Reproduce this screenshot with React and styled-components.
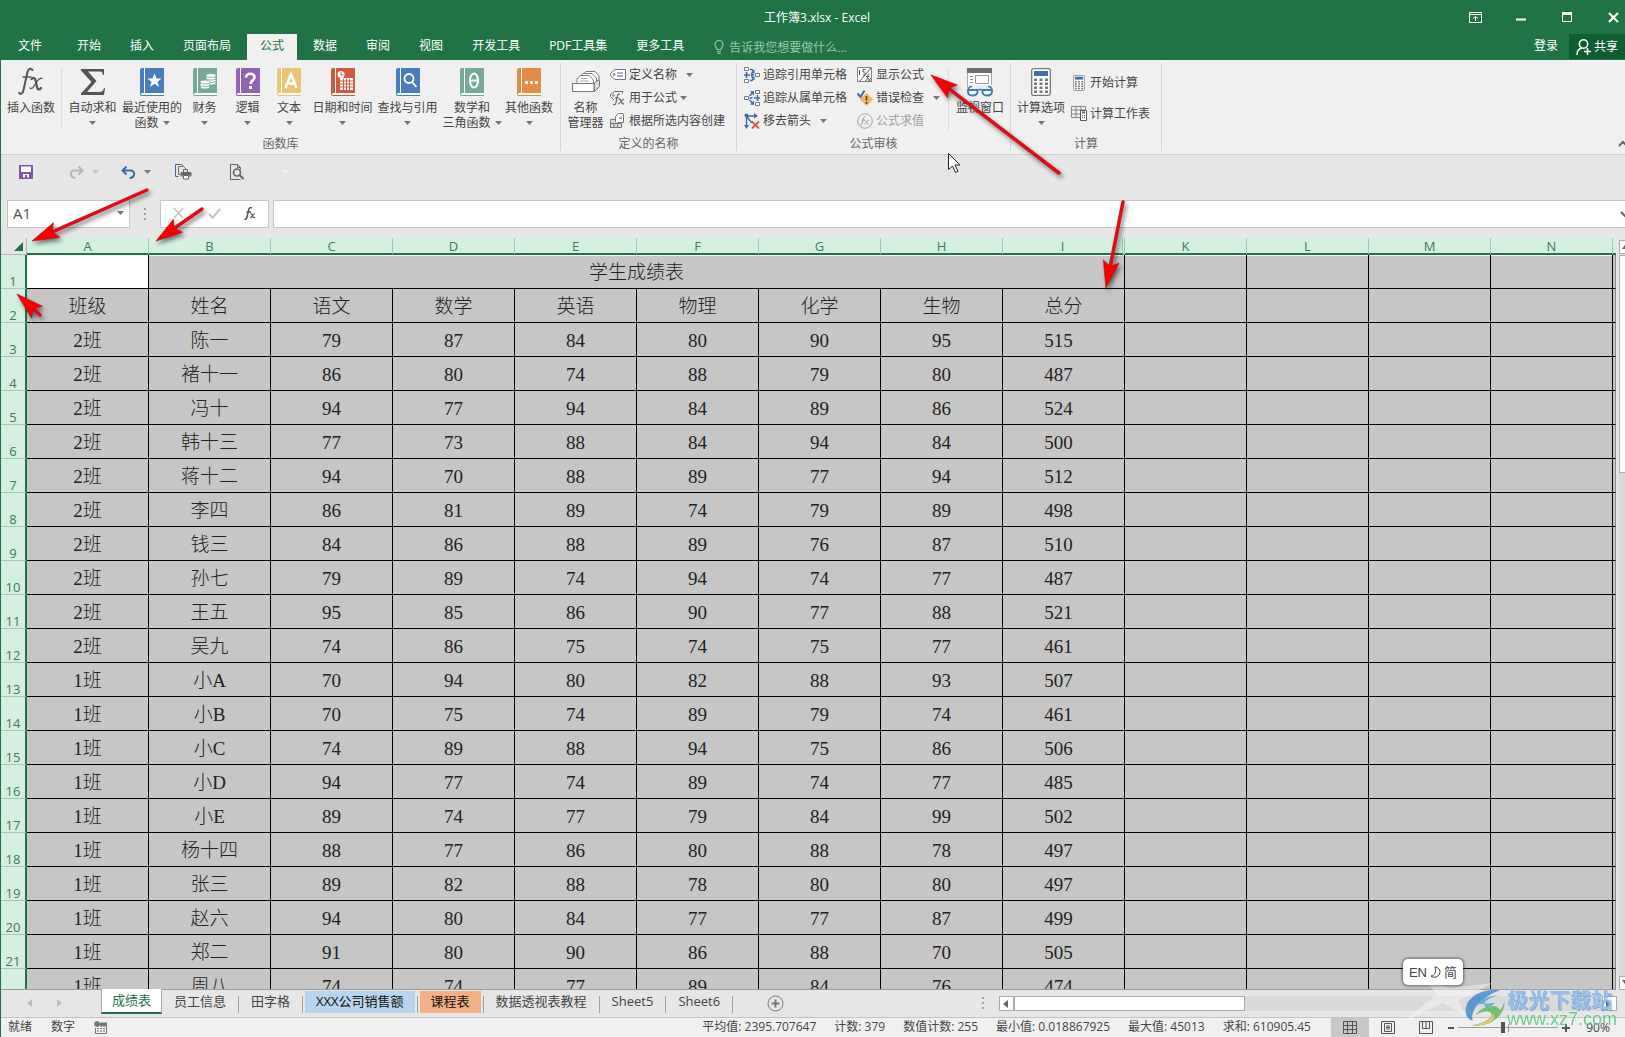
import React from 'react'
import styled, { createGlobalStyle } from 'styled-components'

const GlobalStyle = createGlobalStyle`
  *, *::before, *::after { box-sizing: border-box; }
  body {
    margin: 0;
    overflow: hidden;
    font-family: "Open Sans", "Noto Sans CJK SC", sans-serif;
    font-size: 12px;
    line-height: 15px;
    color: #444;
  }
  button, input {
    font: inherit;
    color: inherit;
    border: 0;
    margin: 0;
    padding: 0;
    background: none;
  }
  svg { display: block; flex: none; }
`

const Window = styled.div`
  position: relative;
  display: flex;
  flex-direction: column;
  height: 100vh;
  overflow: hidden;
  border-left: 1px solid #217346;
  background: #e6e6e6;
`

/* ---------- title bar and tabs ---------- */

const TitleBar = styled.header`
  display: grid;
  grid-template-columns: 1fr auto 1fr;
  align-items: center;
  flex: none;
  height: 34px;
  padding-left: 8px;
  background: #217346;
  color: #fff;
`

const Title = styled.h1`
  grid-column: 2;
  margin: 0;
  font-size: 12px;
  font-weight: 400;
`

const WindowButtons = styled.div`
  display: flex;
  justify-content: flex-end;
`

const WindowButton = styled.button`
  display: flex;
  align-items: center;
  justify-content: center;
  width: 46px;
  height: 32px;
  &:last-child { margin-right: -11px; }
`

const TabBar = styled.nav`
  display: flex;
  flex: none;
  gap: 3px;
  height: 26px;
  background: #217346;
  color: #fff;
`

const Tab = styled.button`
  height: 26px;
  padding: 0 13px 4px;
  white-space: nowrap;
  background: ${p => (p.$active ? '#f0f0f0' : 'transparent')};
  color: ${p => (p.$active ? '#217346' : '#fff')};
`

const FileTab = styled(Tab)`
  padding: 0 19px 4px 17px;
`

const TellMe = styled.button`
  display: flex;
  align-items: center;
  gap: 5px;
  margin-left: 14px;
  color: #9cc5ad;
`

const Account = styled.div`
  display: flex;
  margin-left: auto;
`

const SignIn = styled.button`
  padding: 0 11px 4px 10px;
`

const Share = styled.button`
  display: flex;
  align-items: center;
  gap: 3px;
  height: 25px;
  padding: 0 7px;
  background: #0e5c2f;
`

/* ---------- ribbon ---------- */

const RibbonBar = styled.div`
  display: flex;
  flex: none;
  height: 95px;
  padding: 3px 0;
  border-bottom: 1px solid #d0d0d0;
  background: #f0f0f0;
`

const Group = styled.section`
  display: flex;
  flex-direction: column;
  height: 88px;
  border-right: 1px solid #d4d4d4;
`

const GroupBody = styled.div`
  display: flex;
  height: 73px;
  padding-right: ${p => p.$right || 0}px;
`

const GroupName = styled.div`
  text-align: center;
  line-height: 16px;
  color: #666;
`

const Divider = styled.div`
  width: 1px;
  height: 62px;
  margin: 5px 1px 0 0;
  background: #dcdcdc;
`

const BigButton = styled.button`
  display: flex;
  flex-direction: column;
  align-items: center;
  width: ${p => p.$width}px;
  height: 73px;
  padding-top: 5px;
  white-space: nowrap;
`

const BigIcon = styled.span`
  display: flex;
  align-items: center;
  height: 28px;
  margin-bottom: 4px;
`

const Line = styled.span`
  display: flex;
  align-items: center;
  justify-content: center;
  gap: 4px;
  height: 15px;
`

const SmallColumn = styled.div`
  display: flex;
  flex-direction: column;
  align-items: flex-start;
  padding-top: ${p => p.$top || 0}px;
  padding-left: ${p => p.$left || 0}px;
  width: ${p => p.$width}px;
`

const SmallRow = styled.div`
  display: flex;
  align-items: center;
  height: ${p => p.$height || 23}px;
`

const SmallButton = styled.button`
  display: flex;
  align-items: center;
  gap: 3px;
  white-space: nowrap;
  color: ${p => (p.$muted ? '#a0a0a0' : '#444')};
`

const DropButton = styled.button`
  padding: 4px 0 4px ${p => p.$gap || 9}px;
`

const Collapse = styled.button`
  align-self: flex-end;
  margin: 0 -3px 4px auto;
`

/* ---------- quick access and formula bar ---------- */

const QuickAccess = styled.div`
  display: flex;
  align-items: center;
  flex: none;
  height: 45px;
  padding: 0 0 11px 18px;
`

const QuickButton = styled.button`
  display: flex;
  align-items: center;
  gap: 8px;
  margin-right: ${p => p.$after || 0}px;
`

const FormulaBar = styled.div`
  display: flex;
  flex: none;
  height: 38px;
  padding: 0 0 10px 6px;
`

const NameBox = styled.div`
  display: flex;
  align-items: center;
  width: 123px;
  border: 1px solid #c6c6c6;
  background: #fff;
  padding: 0 5px 2px 0;
  input {
    flex: 1;
    min-width: 0;
    padding-left: 5px;
    font-size: 15px;
    color: #555;
  }
`

const Grip = styled.div`
  display: flex;
  align-items: center;
  justify-content: center;
  width: 30px;
`

const FormulaTools = styled.div`
  display: flex;
  align-items: center;
  justify-content: space-between;
  width: 109px;
  padding: 0 12px 2px;
  margin-right: 4px;
  border: 1px solid #c6c6c6;
  background: #fff;
`

const FormulaField = styled.div`
  display: flex;
  flex: 1;
  align-items: center;
  border: 1px solid #c6c6c6;
  border-right: 0;
  background: #fff;
  input { flex: 1; }
  button { margin-right: -5px; }
`

/* ---------- sheet ---------- */

const SheetArea = styled.main`
  display: flex;
  flex: 1;
  min-height: 0;
`

const GridViewport = styled.div`
  flex: 1;
  min-width: 0;
  overflow: hidden;
  border-bottom: 1px solid #9b9b9b;
`

const Grid = styled.table`
  width: 100%;
  table-layout: fixed;
  border-collapse: separate;
  border-spacing: 0;
`

const Corner = styled.th`
  width: 26px;
  height: 17px;
  padding: 0 3px 0 0;
  border-right: 1px solid #b7b7b7;
  border-bottom: 1px solid #b7b7b7;
  svg { margin-left: auto; }
`

const ColHead = styled.th`
  height: 17px;
  padding: 2px 0 0;
  font-size: 13px;
  font-weight: 400;
  line-height: 13px;
  color: #3c7a59;
  background: #d3f0e0;
  border-right: ${p => (p.$wide ? '3px double #9fc9b3' : '1px solid #a5c7b5')};
  border-bottom: 2px solid #217346;
`

const EdgeHead = styled.th`
  width: 3px;
  padding: 0;
  background: #d3f0e0;
  border-bottom: 2px solid #217346;
`

const RowHead = styled.th`
  height: 34px;
  padding: 0;
  vertical-align: bottom;
  font-size: 13px;
  font-weight: 400;
  line-height: 13px;
  color: #3c7a59;
  background: #d3f0e0;
  border-right: 2px solid #217346;
  border-bottom: 1px solid #a5c7b5;
`

const Cell = styled.td`
  height: 34px;
  padding: 2px ${p => (p.$total ? 10 : 0)}px 0 0;
  overflow: hidden;
  text-align: center;
  white-space: nowrap;
  font-family: "Liberation Serif", "Noto Sans CJK SC", serif;
  font-size: 19px;
  font-weight: 300;
  line-height: 24px;
  color: #222;
  background: ${p => (p.$current ? '#fff' : '#c6c6c6')};
  border-right: 1px solid #000;
  border-bottom: 1px solid #000;
  tr:first-child > & { box-shadow: inset 0 1px #fff; }
`

const EdgeCell = styled.td`
  padding: 0;
  background: #c6c6c6;
  border-right: 1px solid #8f8f8f;
  border-bottom: 1px solid #000;
`

const VScroll = styled.div`
  display: flex;
  flex-direction: column;
  flex: none;
  width: 9px;
  padding: 2px 0 0 3px;
  overflow: hidden;
`

const VArrow = styled.button`
  display: flex;
  align-items: center;
  flex: none;
  height: 14px;
  padding-left: 2px;
  border: 1px solid #ababab;
  border-right: 0;
  background: #fff;
`

const VThumb = styled.div`
  height: 218px;
  margin-top: 1px;
  border: 1px solid #ababab;
  border-right: 0;
  background: #fff;
`

const VTrack = styled.div`
  flex: 1;
  background: #dadada;
`

/* ---------- sheet tabs ---------- */

const SheetBar = styled.div`
  display: flex;
  flex: none;
  height: 28px;
  margin-top: -1px;
`

const SheetNav = styled.div`
  display: flex;
  align-items: center;
  gap: 23px;
  width: 100px;
  padding-left: 26px;
`

const SheetTab = styled.button`
  display: flex;
  align-items: center;
  height: 24px;
  padding: 1px 2px 0;
  font-size: 13px;
  white-space: nowrap;
  &::after {
    content: "";
    width: 1px;
    height: 17px;
    margin: 6px -2px 0 2px;
    background: #a0a0a0;
  }
`

const SheetLabel = styled.span`
  padding: 0 ${p => (p.$fill ? 11 : 10)}px 2px;
  line-height: 20px;
  color: ${p => (p.$fill ? '#111' : '#444')};
  background: ${p => p.$fill || 'transparent'};
`

const ActiveTab = styled.button`
  height: 25px;
  padding: 0 10px;
  font-size: 13px;
  color: #217346;
  background: #fff;
  border-left: 1px solid #ababab;
  border-right: 1px solid #ababab;
  border-bottom: 2px solid #217346;
`

const AddSheet = styled.button`
  margin-left: 34px;
`

const HScroll = styled.div`
  display: flex;
  width: 618px;
  height: 15px;
  margin: 7px 8px 0 15px;
  background: #dadada;
`

const SheetGrip = styled.div`
  display: flex;
  align-items: center;
  margin-left: auto;
`

const HArrow = styled.button`
  display: flex;
  align-items: center;
  justify-content: center;
  width: 15px;
  border: 1px solid #ababab;
  background: #fff;
`

const HThumb = styled.div`
  width: 231px;
  margin-right: auto;
  border: 1px solid #ababab;
  background: #fff;
`

/* ---------- status bar ---------- */

const StatusBar = styled.footer`
  display: flex;
  align-items: center;
  flex: none;
  height: 20px;
  padding-left: 7px;
  border-top: 1px solid #c3c3c3;
  background: #f0f0f0;
  white-space: nowrap;
`

const StatusText = styled.span`
  margin-right: 19px;
  padding-bottom: 2px;
`

const Stats = styled.div`
  display: flex;
  gap: 18px;
  margin: 0 20px 0 auto;
  padding-bottom: 2px;
`

const ViewButton = styled.button`
  display: flex;
  align-items: center;
  justify-content: center;
  width: 38px;
  height: 19px;
  background: ${p => (p.$active ? '#c8c8c8' : 'transparent')};
`

const ZoomButton = styled.button`
  width: ${p => p.$width}px;
  display: flex;
  justify-content: center;
`

const ZoomSlider = styled.input`
  appearance: none;
  width: 100px;
  height: 12px;
  margin: 0 3px 0 1px;
  background:
    linear-gradient(#999, #999) center / 1px 8px no-repeat,
    linear-gradient(#999, #999) center / 100% 1px no-repeat;
  &::-webkit-slider-thumb {
    appearance: none;
    width: 4px;
    height: 11px;
    background: #555;
  }
`

const ZoomValue = styled.button`
  width: 40px;
  margin: 0 7px;
  text-align: center;
`

/* ---------- things lying over the window ---------- */

const Ime = styled.div`
  position: absolute;
  right: 162px;
  bottom: 52px;
  display: flex;
  align-items: center;
  justify-content: center;
  gap: 3px;
  width: 60px;
  height: 26px;
  border-radius: 5px;
  background: #fff;
  box-shadow: 0 0 3px 1px rgba(0, 0, 0, .5);
  font-family: "Liberation Sans", "Noto Sans CJK SC", sans-serif;
  font-size: 13px;
`

const Watermark = styled.div`
  position: absolute;
  right: 8px;
  bottom: 8px;
  display: flex;
  align-items: flex-end;
  opacity: .8;
  pointer-events: none;
  svg { overflow: visible; }
`

const WatermarkText = styled.div`
  display: flex;
  flex-direction: column;
  margin-left: 2px;
  strong {
    font-size: 21px;
    line-height: 19px;
    color: #7fb2e6;
    text-shadow: 0 0 1px #fff, 1px 1px 1px #4a86c8;
  }
  span {
    font-family: "Liberation Sans", sans-serif;
    font-size: 18px;
    line-height: 20px;
    color: #4fbd78;
    text-shadow: 0 0 2px #fff;
  }
`

const Overlay = styled.svg`
  position: absolute;
  top: 0;
  left: -1px;
  width: 1200px;
  height: 400px;
  pointer-events: none;
`

/* ---------- icons ---------- */

const Caret = ({ color = '#777' }) => (
  <svg width="7" height="4" viewBox="0 0 7 4"><path d="M0 0h7L3.500 4z" fill={color} /></svg>
)

const Chevron = ({ down }) => (
  <svg width="10" height="7" viewBox="0 0 10 7">
    <path d={down ? 'M1 1l4 4 4-4' : 'M1 6l4-4 4 4'} fill="none" stroke="#666" strokeWidth="2" />
  </svg>
)

const Dots = ({ color = '#a0a0a0' }) => (
  <svg width="2" height="12" viewBox="0 0 2 12" fill={color}>
    <path d="M0 0h2v2H0zM0 5h2v2H0zM0 10h2v2H0z" />
  </svg>
)

const Book = ({ color, children }) => (
  <svg width="24" height="28" viewBox="0 0 24 28">
    <path d="M2 0h22v28H2a2 2 0 0 1-2-2V2a2 2 0 0 1 2-2z" fill={color} />
    <path d="M4.500 0v25" stroke="#fff" />
    <path d="M2 25h22v2H2a1 1 0 0 1 0-2z" fill="#fff" />
    {children}
  </svg>
)

const FxIcon = () => (
  <svg width="26" height="30" viewBox="0 0 26 30" fill="none" stroke="#555" strokeLinecap="round">
    <path d="M14.500 3c-1-2-4-2-5 2L5.500 23c-.8 4-3 4.500-4.500 3" strokeWidth="2" />
    <path d="M5 10h8" strokeWidth="1.400" />
    <path d="M13.500 12c2-2 3.500-1 4 1l1.500 7c.5 3 2.500 3 4 1" strokeWidth="2.200" />
    <path d="M24 11.500c-2-1-3.500.5-5 3l-3 4.500c-1 2-2.500 3-4 2" strokeWidth="1.300" />
  </svg>
)

const SigmaIcon = () => (
  <svg width="24" height="28" viewBox="0 0 24 28">
    <path d="M0 1h23v6h-1c-.5-3-1.500-3.500-4-3.500H7L15.500 13 6 24h12c3 0 4-1 5-4h1l-1 7H0v-1.500L10.500 14 0 2.500z" fill="#555" />
  </svg>
)

const StarGlyph = () => <path d="M14.500 5.500l2 5h5l-4 3.200 1.500 5.300-4.500-3.200L10 19l1.500-5.300-4-3.200h5z" fill="#fff" />

const CoinsGlyph = () => (
  <g fill="#fff" stroke="#76a996" strokeWidth=".8">
    {[14, 11.500, 9, 6.500].map(y => <ellipse key={y} cx="18" cy={y + 1} rx="5" ry="2" />)}
    {[19, 16.500, 14].map(y => <ellipse key={y} cx="12" cy={y} rx="5" ry="2" />)}
  </g>
)

const QuestionGlyph = () => (
  <g>
    <path d="M10 9.500c0-5 8.500-5 8.500-.3 0 3-3.800 3.300-3.800 6.800" fill="none" stroke="#fff" strokeWidth="2.600" />
    <rect x="13" y="18" width="3" height="3" fill="#fff" />
  </g>
)

const LetterGlyph = () => <path d="M8.500 20L14 6l5.500 14M10 15.500h8" fill="none" stroke="#fff" strokeWidth="2.600" />

const DateGlyph = () => (
  <g>
    <circle cx="10" cy="6.500" r="3.500" fill="#fff" />
    <path d="M10 4v3h2.500" fill="none" stroke="#d05a3f" />
    <rect x="9" y="10" width="13" height="12" fill="#fff" />
    <path d="M9 13h13M9 16h13M9 19h13M12.500 11v11M15.500 11v11M18.500 11v11" stroke="#d05a3f" />
  </g>
)

const SearchGlyph = () => (
  <g fill="none" stroke="#fff" strokeWidth="1.800">
    <circle cx="13" cy="10.500" r="4.500" />
    <path d="M16 14l4.500 5" />
  </g>
)

const ThetaGlyph = () => (
  <g fill="none" stroke="#fff" strokeWidth="2">
    <ellipse cx="14" cy="12.500" rx="4" ry="7" />
    <path d="M10 12.500h8" />
  </g>
)

const MoreGlyph = () => <path d="M8 13h3v3H8zM13 13h3v3h-3zM18 13h3v3h-3z" fill="#fff" />

const NameManagerIcon = () => (
  <svg width="30" height="22" viewBox="0 0 30 22" fill="#fff" stroke="#777">
    <path d="M12 8V4l3-3.500h9l4 4.500v9" />
    <path d="M9 10V6l3-3.500h9l4.500 4.500v7" />
    <path d="M6 12V8l3-3.500h9l4.500 4.500v5" />
    <path d="M10 7.500h6M8.500 10h9" stroke="#aaa" />
    <path d="M23 12.500l4-3.500 1.500 1v5.500l-5 5z" fill="#ddd" />
    <rect x="1.500" y="12.500" width="21.500" height="8" />
  </svg>
)

const TagIcon = () => (
  <svg width="16" height="14" viewBox="0 0 16 14" fill="none" stroke="#777">
    <path d="M5 1.500h10.500v10H5L.500 7.500v-2z" fill="#fff" />
    <circle cx="4" cy="6.500" r="1" />
    <path d="M7 5h6M7 8h6" stroke="#44699b" />
  </svg>
)

const UseFormulaIcon = () => (
  <svg width="16" height="16" viewBox="0 0 16 16" fill="none" stroke="#666">
    <path d="M4 10L.500 6.500v-2L4.500 1.500h8v2" />
    <circle cx="3.500" cy="5.500" r=".8" />
    <path d="M10 4.500c-2-1-2.500 1-3 3L6 12.500c-.5 2.500-1.500 2.500-3 2M5 8h4.500" strokeWidth="1.200" />
    <path d="M9 9.500c2-.5 2 1 2.500 2.500s1 2.500 2.500 1.500M14 9c-2 0-4 5-6 5" strokeWidth="1.200" />
  </svg>
)

const FromSelectionIcon = () => (
  <svg width="16" height="16" viewBox="0 0 16 16" fill="none" stroke="#777">
    <path d="M.500 6.500h7v8h-7zM.500 10.500h11v4H.500M4 10v4" fill="#d9dde3" />
    <path d="M5.500 9V3.500L8.500.500h4.500l.500 1v8H8" fill="#fff" />
    <path d="M9 5h3" stroke="#44699b" />
  </svg>
)

const PrecedentsIcon = () => (
  <svg width="16" height="16" viewBox="0 0 16 16" fill="none">
    <path d="M.500.500h4v3h-4zM.500 12.500h4v3h-4zM11.500 6.500h4v3h-4z" stroke="#777" fill="#fff" />
    <path d="M2.500 5v6M0 8h6M6 2.500h2l1.500 2M6 13.500h2l1.500-2" stroke="#3c6ca8" strokeWidth="1.600" />
    <path d="M10.500 2.500v4h-4zM10.500 13.500v-4h-4zM7 6l3.500 2L7 10z" fill="#3c6ca8" />
  </svg>
)

const DependentsIcon = () => (
  <svg width="16" height="16" viewBox="0 0 16 16" fill="none">
    <path d="M11.500.500h4v3h-4zM11.500 12.500h4v3h-4zM.500 6.500h4v3h-4z" stroke="#777" fill="#fff" />
    <path d="M13.500 5v6M10 8h6M5.500 6l3-3M5.500 10l3 3M5.500 8h3" stroke="#3c6ca8" strokeWidth="1.600" />
    <path d="M10 1v4.500L6 1.500zM10 15v-4.500L6 14.500z" fill="#3c6ca8" />
  </svg>
)

const RemoveArrowsIcon = () => (
  <svg width="16" height="16" viewBox="0 0 16 16" fill="none">
    <path d="M2.500 2v12M2.500 3h9M3 4l5 6" stroke="#3c6ca8" strokeWidth="1.400" />
    <path d="M0 12h5l-2.500 4zM10 0l4 3-4 2.500z" fill="#3c6ca8" />
    <circle cx="2.500" cy="2.500" r="2" fill="#3c6ca8" />
    <path d="M8 8.500l7 7M15 8.500l-7 7" stroke="#d9534a" strokeWidth="1.800" />
  </svg>
)

const ShowFormulasIcon = () => (
  <svg width="16" height="16" viewBox="0 0 16 16" fill="none" stroke="#555">
    <path d="M.500.500h14v14H.500z" stroke="#888" fill="#fff" />
    <path d="M2.500 3v5M8.500 2.500H6v2.500c3-.5 3 3 0 3M14 1L2 15" />
    <path d="M12.500 7c-1.500-.5-1.500 1-2 3s-.5 4-2 3.500M9 9.500h3.500M11 11l3 4M14 11l-3 4" />
  </svg>
)

const ErrorCheckIcon = () => (
  <svg width="16" height="16" viewBox="0 0 16 16" fill="none">
    <path d="M9.500 3L16 9.500 9.500 16 3 9.500z" fill="#f2b45c" />
    <path d="M9.500 6v4.500M9.500 12v2" stroke="#444" strokeWidth="1.600" />
    <path d="M.500 3.500l3 3.500L7.500.500" stroke="#3c6ca8" strokeWidth="2" />
  </svg>
)

const EvaluateIcon = () => (
  <svg width="16" height="16" viewBox="0 0 16 16" fill="none" stroke="#a8a0a8">
    <circle cx="8" cy="8" r="7.300" />
    <path d="M8.500 4c-1.500-.8-2 .5-2.300 2l-.9 4c-.3 2-1 2-2 1.700M4.500 7h3.500M8 7.500c1.500 0 1.500 4 3.500 3.500M12 7c-1.500 0-2.500 4-4.500 4" />
  </svg>
)

const WatchIcon = () => (
  <svg width="28" height="29" viewBox="0 0 28 29" fill="none">
    <path d="M1.500.500h24v19h-24z" fill="#fff" stroke="#aaa" />
    <path d="M1 0h25v5H1z" fill="#6e6e6e" />
    <path d="M4 8.500h3M4 11.500h3M4 14.500h3" stroke="#888" />
    <path d="M9.500 7.500h13v8h-13z" stroke="#999" />
    <path d="M2 17h24v12H2z" fill="#f0f0f0" />
    <path d="M2 23c0-3 1-4.500 4-4.500M26 23c0-3-1-4.500-4-4.500M11 22.500c1-1.500 5-1.500 6 0" stroke="#3f78b5" strokeWidth="1.500" />
    <path d="M2 22h9.500c.5 4-1.500 5.500-5 5.500S1.500 26 2 22zM16.500 22H26c.5 4-1.500 5.500-5 5.500s-5-1.500-4.500-5.500z" fill="#f8f8f8" stroke="#3f78b5" strokeWidth="1.800" />
  </svg>
)

const CalcIcon = ({ width = 20, height = 28 }) => (
  <svg width={width} height={height} viewBox="0 0 20 28">
    <rect x=".7" y=".7" width="18.600" height="26.600" rx="1.500" fill="#fff" stroke="#777" strokeWidth="1.300" />
    <path d="M3 3h14v5H3z" fill="#3f6fa8" />
    {[10.500, 14.500, 18.500, 22.500].map(y => (
      <path key={y} d={`M3 ${y}h3v2.500h-3zM8.500 ${y}h3v2.500h-3zM14 ${y}h3v2.500h-3z`} fill="#777" />
    ))}
  </svg>
)

const CalcSheetIcon = () => (
  <svg width="16" height="15" viewBox="0 0 16 15" fill="none" stroke="#888">
    <path d="M.500.500h14v11H.500zM.500 4h14M.500 8h14M5 .500v11M10 .500v11" />
    <path d="M9.500 4.500h6v10h-6z" fill="#fff" stroke="#555" />
    <path d="M11 6.500h3" stroke="#3f6fa8" strokeWidth="2" />
    <path d="M11 9.500h3M11 11.500h3" strokeDasharray="1 1" stroke="#555" />
  </svg>
)

const SaveIcon = () => (
  <svg width="14" height="14" viewBox="0 0 14 14">
    <path d="M0 0h14v14H0z" fill="#7f56a6" />
    <path d="M2 1.500h10V7H2zM4 9h6v3.500H8V10H6v2.500H4z" fill="#fff" />
  </svg>
)

const UndoIcon = ({ color, flip }) => (
  <svg width="15" height="13" viewBox="0 0 15 13" fill="none" stroke={color} strokeWidth="2">
    <g transform={flip ? 'translate(15 0) scale(-1 1)' : undefined}>
      <path d="M5.500.500L1.500 4.500l4 4M2 4.500h7.500c5 0 5 7-1 7.500" />
    </g>
  </svg>
)

const PrintIcon = () => (
  <svg width="17" height="16" viewBox="0 0 17 16" fill="none" stroke="#666">
    <path d="M3.500 12.500h-3V.500h6l2 2" stroke="#44699b" />
    <path d="M5 10.500H3.500v-8h5l3 3" stroke="#777" />
    <path d="M8.500 8.500v-3h4v3M6 8.500h10v3.500H6z" />
    <path d="M6 10h10" strokeWidth="2.500" />
    <path d="M8.500 11.500h5v3.500h-5z" fill="#fff" />
  </svg>
)

const PreviewIcon = () => (
  <svg width="14" height="16" viewBox="0 0 14 16" fill="none" stroke="#666">
    <path d="M10.500 15.500H.500V.500h7l3 3v2M7.500.500v3h3" />
    <circle cx="7" cy="8.500" r="3.500" strokeWidth="1.700" />
    <path d="M9.500 11l4 4" strokeWidth="2" />
  </svg>
)

const SmallFx = () => (
  <svg width="12" height="13" viewBox="0 0 12 13" fill="none" stroke="#555">
    <path d="M8 1c-2-1-3 0-3.500 2.500L3 10c-.4 2-1.200 2.500-2.500 2M2.500 5H7" strokeWidth="1.500" />
    <path d="M6.500 7c1.500-.5 1.700.5 2 2s1 2 2.500 1M11 6.500c-2 0-3 4.500-5 4.500" strokeWidth="1.200" />
  </svg>
)

const IconX = () => (
  <svg width="12" height="10" viewBox="0 0 12 10"><path d="M1 0l9 10M10 0L1 10" stroke="#c4c4c4" strokeWidth="1.600" /></svg>
)

const IconCheck = () => (
  <svg width="13" height="11" viewBox="0 0 13 11"><path d="M1 6l3.500 4L12 1" fill="none" stroke="#c4c4c4" strokeWidth="2" /></svg>
)

const Triangle = ({ dir, color = '#666' }) => {
  const shapes = { left: 'M5 0v8L0 4z', right: 'M0 0v8l5-4z', up: 'M0 6h7L3.500 1z', down: 'M0 1h7L3.500 6z' }
  return <svg width="7" height="8" viewBox="0 0 7 8"><path d={shapes[dir]} fill={color} /></svg>
}

// head is drawn on the unit direction from tail to tip
const Arrow = ({ from, to }) => {
  const dx = to[0] - from[0]
  const dy = to[1] - from[1]
  const len = Math.hypot(dx, dy)
  const ux = dx / len
  const uy = dy / len
  const at = (back, side) => `${to[0] - ux * back - uy * side},${to[1] - uy * back + ux * side}`
  return (
    <g>
      <line x1={from[0]} y1={from[1]} x2={to[0] - ux * 18} y2={to[1] - uy * 18} stroke="#dc0d17" strokeWidth="3.500" strokeLinecap="round" />
      <polygon points={`${at(0, 0)} ${at(27, 8)} ${at(22, 0)} ${at(27, -8)}`} fill="#f80000" stroke="#c00010" strokeWidth=".6" />
    </g>
  )
}

/* ---------- data ---------- */

const tabs = ['开始', '插入', '页面布局', '公式', '数据', '审阅', '视图', '开发工具', 'PDF工具集', '更多工具']

const library = [
  { width: 59, lines: ['自动求和'], icon: <SigmaIcon /> },
  { width: 60, lines: ['最近使用的', '函数'], icon: <Book color="#4a7ebb"><StarGlyph /></Book> },
  { width: 45, lines: ['财务'], icon: <Book color="#76a996"><CoinsGlyph /></Book> },
  { width: 41, lines: ['逻辑'], icon: <Book color="#9163b3"><QuestionGlyph /></Book> },
  { width: 42, lines: ['文本'], icon: <Book color="#ecc475"><LetterGlyph /></Book> },
  { width: 65, lines: ['日期和时间'], icon: <Book color="#d05a3f"><DateGlyph /></Book> },
  { width: 65, lines: ['查找与引用'], icon: <Book color="#4a7ebb"><SearchGlyph /></Book> },
  { width: 64, lines: ['数学和', '三角函数'], icon: <Book color="#76a996"><ThetaGlyph /></Book> },
  { width: 50, lines: ['其他函数'], icon: <Book color="#e38c45"><MoreGlyph /></Book> },
]

const columns = ['A', 'B', 'C', 'D', 'E', 'F', 'G', 'H', 'I', 'K', 'L', 'M', 'N']

const rows = [
  ['班级', '姓名', '语文', '数学', '英语', '物理', '化学', '生物', '总分'],
  ['2班', '陈一', 79, 87, 84, 80, 90, 95, 515],
  ['2班', '褚十一', 86, 80, 74, 88, 79, 80, 487],
  ['2班', '冯十', 94, 77, 94, 84, 89, 86, 524],
  ['2班', '韩十三', 77, 73, 88, 84, 94, 84, 500],
  ['2班', '蒋十二', 94, 70, 88, 89, 77, 94, 512],
  ['2班', '李四', 86, 81, 89, 74, 79, 89, 498],
  ['2班', '钱三', 84, 86, 88, 89, 76, 87, 510],
  ['2班', '孙七', 79, 89, 74, 94, 74, 77, 487],
  ['2班', '王五', 95, 85, 86, 90, 77, 88, 521],
  ['2班', '吴九', 74, 86, 75, 74, 75, 77, 461],
  ['1班', '小A', 70, 94, 80, 82, 88, 93, 507],
  ['1班', '小B', 70, 75, 74, 89, 79, 74, 461],
  ['1班', '小C', 74, 89, 88, 94, 75, 86, 506],
  ['1班', '小D', 94, 77, 74, 89, 74, 77, 485],
  ['1班', '小E', 89, 74, 77, 79, 84, 99, 502],
  ['1班', '杨十四', 88, 77, 86, 80, 88, 78, 497],
  ['1班', '张三', 89, 82, 88, 78, 80, 80, 497],
  ['1班', '赵六', 94, 80, 84, 77, 77, 87, 499],
  ['1班', '郑二', 91, 80, 90, 86, 88, 70, 505],
  ['1班', '周八', 74, 74, 77, 89, 84, 76, 474],
]

const sheets = [
  { name: '员工信息' },
  { name: '田字格' },
  { name: 'XXX公司销售额', fill: '#b8d4ee' },
  { name: '课程表', fill: '#f4b084' },
  { name: '数据透视表教程' },
  { name: 'Sheet5' },
  { name: 'Sheet6' },
]

const stats = [
  '平均值: 2395.707647',
  '计数: 379',
  '数值计数: 255',
  '最小值: 0.018867925',
  '最大值: 45013',
  '求和: 610905.45',
]

/* ---------- parts ---------- */

const Big = ({ icon, lines, width, caret }) => (
  <BigButton $width={width}>
    <BigIcon>{icon}</BigIcon>
    {lines.map((line, i) => (
      <Line key={line}>{line}{caret && i === 1 && <Caret />}</Line>
    ))}
    {caret && lines.length === 1 && <Line><Caret /></Line>}
  </BigButton>
)

const Small = ({ icon, label, drop, gap, muted, height }) => (
  <SmallRow $height={height}>
    <SmallButton $muted={muted}>{icon}{label}</SmallButton>
    {drop && <DropButton $gap={gap} aria-label={`${label} 选项`}><Caret /></DropButton>}
  </SmallRow>
)

const Ribbon = () => (
  <RibbonBar>
    <Group>
      <GroupBody $right={6}>
        <Big width={60} icon={<FxIcon />} lines={['插入函数']} />
        <Divider />
        {library.map(item => <Big key={item.lines[0]} caret {...item} />)}
      </GroupBody>
      <GroupName>函数库</GroupName>
    </Group>
    <Group>
      <GroupBody>
        <Big width={49} icon={<NameManagerIcon />} lines={['名称', '管理器']} />
        <SmallColumn $width={126}>
          <Small icon={<TagIcon />} label="定义名称" drop />
          <Small icon={<UseFormulaIcon />} label="用于公式" drop gap={3} />
          <Small icon={<FromSelectionIcon />} label="根据所选内容创建" />
        </SmallColumn>
      </GroupBody>
      <GroupName>定义的名称</GroupName>
    </Group>
    <Group>
      <GroupBody>
        <SmallColumn $width={120} $left={7}>
          <Small icon={<PrecedentsIcon />} label="追踪引用单元格" />
          <Small icon={<DependentsIcon />} label="追踪从属单元格" />
          <Small icon={<RemoveArrowsIcon />} label="移去箭头" drop />
        </SmallColumn>
        <SmallColumn $width={91}>
          <Small icon={<ShowFormulasIcon />} label="显示公式" />
          <Small icon={<ErrorCheckIcon />} label="错误检查" drop />
          <Small icon={<EvaluateIcon />} label="公式求值" muted />
        </SmallColumn>
        <Divider />
        <Big width={60} icon={<WatchIcon />} lines={['监视窗口']} />
      </GroupBody>
      <GroupName>公式审核</GroupName>
    </Group>
    <Group>
      <GroupBody>
        <Big width={60} icon={<CalcIcon />} lines={['计算选项']} caret />
        <SmallColumn $width={90} $top={4}>
          <Small height={31} icon={<CalcIcon width={16} height={16} />} label="开始计算" />
          <Small height={31} icon={<CalcSheetIcon />} label="计算工作表" />
        </SmallColumn>
      </GroupBody>
      <GroupName>计算</GroupName>
    </Group>
    <Collapse aria-label="折叠功能区"><Chevron /></Collapse>
  </RibbonBar>
)

const Sheet = () => (
  <Grid>
    <thead>
      <tr>
        <Corner>
          <svg width="9" height="9" viewBox="0 0 9 9"><path d="M9 0v9H0z" fill="#217346" /></svg>
        </Corner>
        {columns.map(c => <ColHead key={c} scope="col" $wide={c === 'I'}>{c}</ColHead>)}
        <EdgeHead />
      </tr>
    </thead>
    <tbody>
      <tr>
        <RowHead scope="row">1</RowHead>
        <Cell $current />
        <Cell colSpan={8}>学生成绩表</Cell>
        <Cell /><Cell /><Cell /><Cell />
        <EdgeCell />
      </tr>
      {rows.map((row, i) => (
        <tr key={row[1]}>
          <RowHead scope="row">{i + 2}</RowHead>
          {row.map((value, j) => <Cell key={j} $total={j === 8 && i > 0}>{value}</Cell>)}
          <Cell /><Cell /><Cell /><Cell />
          <EdgeCell />
        </tr>
      ))}
    </tbody>
  </Grid>
)

const App = () => (
  <Window>
    <GlobalStyle />
    <TitleBar>
      <Title>工作簿3.xlsx - Excel</Title>
      <WindowButtons>
        <WindowButton aria-label="功能区显示选项">
          <svg width="13" height="11" viewBox="0 0 13 11" fill="none" stroke="#fff"><path d="M.500.500h12v10H.500zM.500 2.500h12M6.500 9V4.500M4 6.500L6.500 4.500 9 6.500" /></svg>
        </WindowButton>
        <WindowButton aria-label="最小化">
          <svg width="10" height="11" viewBox="0 0 10 11"><path d="M0 6.500h10v2H0z" fill="#fff" /></svg>
        </WindowButton>
        <WindowButton aria-label="最大化">
          <svg width="10" height="11" viewBox="0 0 10 11"><path d="M.500.500h9v9h-9z" fill="none" stroke="#fff" /><path d="M0 0h10v3H0z" fill="#fff" /></svg>
        </WindowButton>
        <WindowButton aria-label="关闭">
          <svg width="11" height="11" viewBox="0 0 11 11"><path d="M1 1l9 9M10 1l-9 9" stroke="#fff" strokeWidth="2.200" /></svg>
        </WindowButton>
      </WindowButtons>
    </TitleBar>
    <TabBar>
      <FileTab>文件</FileTab>
      {tabs.map(t => <Tab key={t} $active={t === '公式'}>{t}</Tab>)}
      <TellMe>
        <svg width="10" height="14" viewBox="0 0 10 14" fill="none" stroke="#9cc5ad" strokeWidth="1.200"><path d="M3 9.500C3 8 1 7 1 4.500a4 4 0 0 1 8 0C9 7 7 8 7 9.500zM3 11.500h4M3.500 13.300h3" /></svg>
        告诉我您想要做什么...
      </TellMe>
      <Account>
        <SignIn>登录</SignIn>
        <Share>
          <svg width="15" height="16" viewBox="0 0 15 16" fill="none" stroke="#fff" strokeWidth="1.500"><circle cx="7.500" cy="5" r="4.200" /><path d="M1 16c0-4 2-6.500 5-7M8 12.500h7M11.500 9v7" /></svg>
          共享
        </Share>
      </Account>
    </TabBar>
    <Ribbon />
    <QuickAccess>
      <QuickButton $after={36} aria-label="保存"><SaveIcon /></QuickButton>
      <QuickButton $after={22} aria-label="恢复"><UndoIcon flip color="#b5b5b5" /><Caret color="#c4c4c4" /></QuickButton>
      <QuickButton $after={24} aria-label="撤消"><UndoIcon color="#3c6ca8" /><Caret /></QuickButton>
      <QuickButton $after={38} aria-label="打印"><PrintIcon /></QuickButton>
      <QuickButton $after={38} aria-label="打印预览"><PreviewIcon /></QuickButton>
      <QuickButton aria-label="自定义快速访问工具栏"><Caret color="#f0f0f0" /></QuickButton>
    </QuickAccess>
    <FormulaBar>
      <NameBox>
        <input aria-label="名称框" defaultValue="A1" />
        <Caret />
      </NameBox>
      <Grip><Dots /></Grip>
      <FormulaTools>
        <button aria-label="取消"><IconX /></button>
        <button aria-label="输入"><IconCheck /></button>
        <button aria-label="插入函数"><SmallFx /></button>
      </FormulaTools>
      <FormulaField>
        <input aria-label="编辑栏" />
        <button aria-label="展开编辑栏"><Chevron down /></button>
      </FormulaField>
    </FormulaBar>
    <SheetArea>
      <GridViewport><Sheet /></GridViewport>
      <VScroll>
        <VArrow aria-label="向上"><Triangle dir="up" /></VArrow>
        <VThumb />
        <VTrack />
        <VArrow aria-label="向下"><Triangle dir="down" /></VArrow>
      </VScroll>
    </SheetArea>
    <SheetBar>
      <SheetNav>
        <button aria-label="上一个工作表"><Triangle dir="left" color="#bcbcbc" /></button>
        <button aria-label="下一个工作表"><Triangle dir="right" color="#bcbcbc" /></button>
      </SheetNav>
      <ActiveTab>成绩表</ActiveTab>
      {sheets.map(s => (
        <SheetTab key={s.name}><SheetLabel $fill={s.fill}>{s.name}</SheetLabel></SheetTab>
      ))}
      <AddSheet aria-label="新工作表">
        <svg width="17" height="17" viewBox="0 0 17 17" fill="none" stroke="#777"><circle cx="8.500" cy="8.500" r="7.500" /><path d="M4.500 8.500h8M8.500 4.500v8" strokeWidth="2" /></svg>
      </AddSheet>
      <SheetGrip><Dots /></SheetGrip>
      <HScroll>
        <HArrow aria-label="向左"><Triangle dir="left" /></HArrow>
        <HThumb />
        <HArrow aria-label="向右"><Triangle dir="right" /></HArrow>
      </HScroll>
    </SheetBar>
    <StatusBar>
      <StatusText>就绪</StatusText>
      <StatusText>数字</StatusText>
      <svg width="13" height="13" viewBox="0 0 13 13" fill="none" stroke="#777">
        <path d="M6 2.500h6.500v10H1.500V7" />
        <path d="M6 2h7v3H6z" fill="#777" />
        <circle cx="3" cy="3" r="2.500" fill="#777" />
        <path d="M3 7.500h8M3 10h8" strokeDasharray="2 1" />
      </svg>
      <Stats>
        {stats.map(s => <span key={s}>{s}</span>)}
      </Stats>
      <ViewButton $active aria-label="普通">
        <svg width="14" height="13" viewBox="0 0 14 13" fill="none" stroke="#555"><path d="M.500.500h13v12H.500zM.500 4.500h13M.500 8.500h13M4.500.500v12M9.500.500v12" /></svg>
      </ViewButton>
      <ViewButton aria-label="页面布局视图">
        <svg width="14" height="13" viewBox="0 0 14 13" fill="none" stroke="#555"><path d="M.500.500h13v12H.500zM3.500 2.500h7v8h-7zM5 5h4M5 6.500h4M5 8h4" /></svg>
      </ViewButton>
      <ViewButton aria-label="分页预览">
        <svg width="14" height="13" viewBox="0 0 14 13" fill="none" stroke="#555"><path d="M.500.500h13v12H.500zM3.500.500v7h7v-7M7 .500v7" /></svg>
      </ViewButton>
      <ZoomButton $width={12} aria-label="缩小">
        <svg width="6" height="2" viewBox="0 0 6 2"><path d="M0 0h6v2H0z" fill="#555" /></svg>
      </ZoomButton>
      <ZoomSlider type="range" min="0" max="100" defaultValue="45" aria-label="缩放" />
      <ZoomButton $width={10} aria-label="放大">
        <svg width="8" height="8" viewBox="0 0 8 8"><path d="M0 3h8v2H0zM3 0h2v8H3z" fill="#555" /></svg>
      </ZoomButton>
      <ZoomValue>90%</ZoomValue>
    </StatusBar>

    <Watermark>
      <svg width="102" height="52" viewBox="0 0 102 52">
        <path d="M0 45L34 17 22 4 48 11 90 6 55 24 62 38 40 26z" fill="#f6f6f6" opacity=".6" />
        <g transform="translate(14 6) scale(.9)">
          <path d="M92 8C68 6 54 18 54 31c0 6 4 10 8 11-3-10 6-25 30-34z" fill="#3b86cf" />
          <path d="M66 24c8-8 16-10 24-10-12 3-16 7-15 12 4 2 8 0 12-4" fill="#4aa7dc" />
          <path d="M97 20c2 14-14 30-36 27 16-3 24-9 21-14-3-3-12-1-17 3 4-9 24-15 27-6 3-2 4-6 5-10z" fill="#5bb85a" />
          <path d="M61 47c14-1 24-8 22-13 8 3-2 15-22 13z" fill="#f0c04a" />
        </g>
      </svg>
      <WatermarkText>
        <strong>极光下载站</strong>
        <span>www.xz7.com</span>
      </WatermarkText>
    </Watermark>

    <Ime>
      EN
      <svg width="11" height="12" viewBox="0 0 11 12" fill="none" stroke="#444"><path d="M5 .800c6 1 7 8 1 10.200-2 .6-4 0-5-1 4-.5 5.500-4 4-9.200z" /></svg>
      简
    </Ime>

    <Overlay viewBox="0 0 1200 400">
      <g style={{ filter: 'drop-shadow(2px 3px 2px rgba(0,0,0,.5))' }}>
        <Arrow from={[147, 190]} to={[32, 241]} />
        <Arrow from={[202, 209]} to={[156, 241]} />
        <Arrow from={[40, 315]} to={[17, 294]} />
        <Arrow from={[1059, 173]} to={[931, 75]} />
        <Arrow from={[1123, 202]} to={[1106, 288]} />
      </g>
      <path d="M948.500 153.500v16l4-3.500 3 6.500 2.500-1.200-3-6.300h5z" fill="#fff" stroke="#222" />
    </Overlay>
  </Window>
)

export default App
